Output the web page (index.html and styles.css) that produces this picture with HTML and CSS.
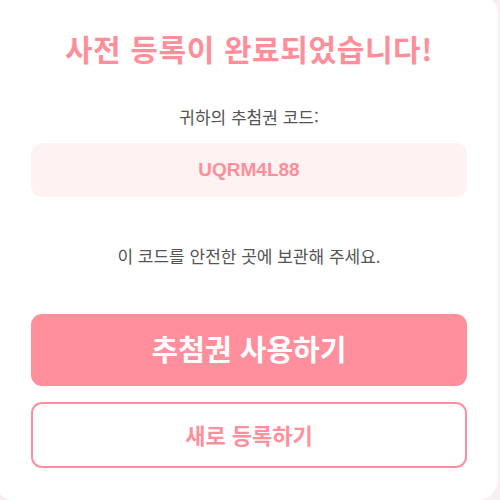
FILE: index.html
```html
<!DOCTYPE html>
<html lang="ko">
<head>
<meta charset="utf-8">
<link rel="stylesheet" href="styles.css">
</head>
<body>
<div class="card">
  <h1 class="title">사전 등록이 완료되었습니다!</h1>
  <p class="label">귀하의 추첨권 코드:</p>
  <div class="code-box"><span class="code">UQRM4L88</span></div>
  <p class="note">이 코드를 안전한 곳에 보관해 주세요.</p>
  <button class="btn btn-primary">추첨권 사용하기</button>
  <button class="btn btn-outline">새로 등록하기</button>
</div>
</body>
</html>
```
FILE: styles.css
```css
html, body {
  margin: 0;
  padding: 0;
  width: 500px;
  height: 500px;
  overflow: hidden;
  background: #faeded;
  font-family: "Noto Sans CJK KR", "Noto Sans", sans-serif;
}
.card {
  box-sizing: border-box;
  width: 504px;
  height: 506px;
  margin: -6px 0 0 -6px;
  padding: 36.5px 31px 32px 37px;
  background: #ffffff;
  border-radius: 20px;
  display: flex;
  flex-direction: column;
  align-items: stretch;
  text-align: center;
}
.title {
  margin: 0;
  font-size: 30px;
  line-height: 34px;
  letter-spacing: 0.6px;
  font-weight: 700;
  color: #ff8e9b;
}
.label {
  margin: 42px 0 0;
  font-size: 17px;
  line-height: 20px;
  color: #555555;
}
.code-box {
  margin-top: 16.5px;
  height: 54px;
  border-radius: 10px;
  background: #fff2f2;
  display: flex;
  align-items: center;
  justify-content: center;
}
.code {
  font-family: "Liberation Sans", Arial, sans-serif;
  font-weight: 700;
  font-size: 19px;
  color: #ff8e9b;
}
.note {
  margin: 48.5px 0 0;
  font-size: 17px;
  line-height: 20px;
  color: #555555;
}
.btn {
  box-sizing: border-box;
  width: 100%;
  font-family: "Noto Sans CJK KR", "Noto Sans", sans-serif;
  font-weight: 700;
  border-radius: 11px;
  cursor: pointer;
}
.btn-primary {
  margin-top: 48.5px;
  height: 72px;
  border: none;
  background: #ff8f9c;
  color: #ffffff;
  font-size: 29px;
  padding: 0 0 4px;
}
.btn-outline {
  margin-top: 16px;
  height: 66px;
  border: 2px solid #ff8f9c;
  background: #ffffff;
  color: #ff8f9c;
  font-size: 22px;
  padding: 0 0 2px;
}
```
